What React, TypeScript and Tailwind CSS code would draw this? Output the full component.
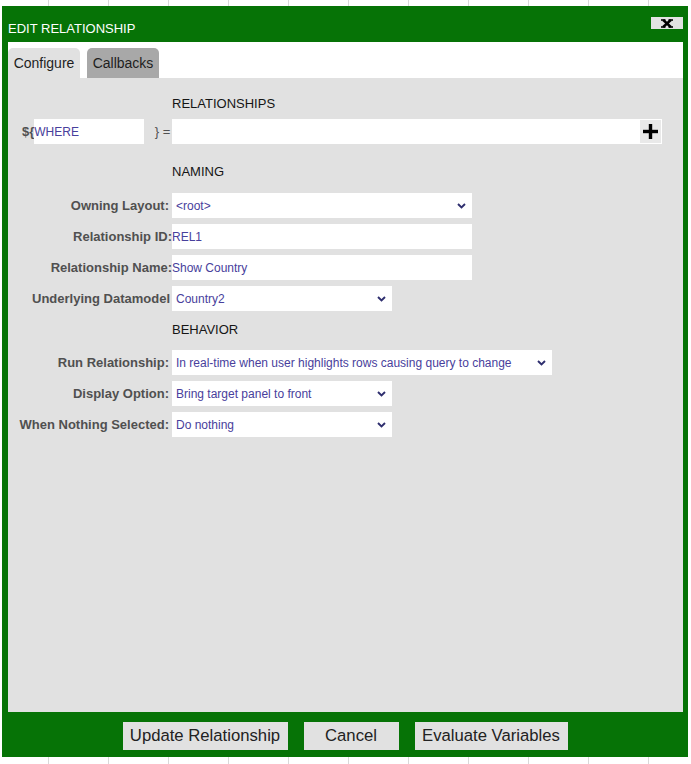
import React from "react";

const font = { fontFamily: '"Liberation Sans", Arial, sans-serif' };

function Chevron() {
  return (
    <svg width="9" height="6" viewBox="0 0 9 6" className="shrink-0">
      <polyline points="1,1 4.5,4.5 8,1" fill="none" stroke="#2e2e6e" strokeWidth="1.9" />
    </svg>
  );
}

function Label({ children, pr = "" }: { children: React.ReactNode; pr?: string }) {
  return (
    <div className={`w-[164px] shrink-0 text-right text-[13px] font-bold text-[#505050] leading-[15px] whitespace-nowrap ${pr}`}>
      {children}
    </div>
  );
}

function SelectRow({ label, value, width, mt }: { label: string; value: string; width: string; mt: string }) {
  return (
    <div className={`flex items-center h-[25px] ${mt}`}>
      <Label pr="pr-[3px]">{label}</Label>
      <div className={`${width} h-[25px] bg-white flex items-center justify-between pl-[4px] pr-[6px]`}>
        <span className="text-[12px] text-[#48409c] whitespace-nowrap">{value}</span>
        <Chevron />
      </div>
    </div>
  );
}

function InputRow({ label, value, mt }: { label: string; value: string; mt: string }) {
  return (
    <div className={`flex items-center h-[25px] ${mt}`}>
      <Label>{label}</Label>
      <div className="w-[300px] h-[25px] bg-white flex items-center">
        <span className="text-[12px] text-[#48409c] whitespace-nowrap">{value}</span>
      </div>
    </div>
  );
}

function Header({ children, mt }: { children: React.ReactNode; mt: string }) {
  return (
    <div className={`pl-[164px] text-[13px] leading-[15px] text-[#151515] ${mt}`}>{children}</div>
  );
}

export default function App() {
  return (
    <div
      style={font}
      className="w-[691px] h-[764px] overflow-hidden bg-white bg-[linear-gradient(to_right,#d9d9d9_1px,transparent_1px)] bg-size-[60px_100%] bg-position-[48px_0] pt-[6px] pl-[2px]"
    >
      <div className="w-[686px] h-[751px] bg-[#067306] flex flex-col">
        {/* Title bar */}
        <div className="h-[36px] shrink-0 flex items-start justify-between pl-[6px] pr-[5px]">
          <div className="mt-[15px] text-[13px] leading-[15px] text-white">EDIT RELATIONSHIP</div>
          <div className="mt-[11px] w-[32px] h-[12px] bg-[#e3e3e3] flex items-center justify-center">
            <svg width="12" height="9" viewBox="0 0 12 9">
              <g stroke="#000" fill="none">
                <line x1="2.2" y1="1" x2="9.8" y2="8" strokeWidth="2.4" />
                <line x1="9.8" y1="1" x2="2.2" y2="8" strokeWidth="2.4" />
                <line x1="0" y1="1" x2="4.5" y2="1" strokeWidth="1.6" />
                <line x1="7.5" y1="1" x2="12" y2="1" strokeWidth="1.6" />
                <line x1="0" y1="8" x2="4.5" y2="8" strokeWidth="1.6" />
                <line x1="7.5" y1="8" x2="12" y2="8" strokeWidth="1.6" />
              </g>
            </svg>
          </div>
        </div>

        {/* Body */}
        <div className="flex-1 ml-[6px] mr-[5px] flex flex-col">
          {/* Tabs */}
          <div className="h-[36px] shrink-0 bg-white flex items-end gap-[7px]">
            <div className="h-[30px] w-[72px] rounded-t-[5px] bg-[#e1e1e1] flex items-center justify-center text-[14px] text-[#1e1e1e]">
              Configure
            </div>
            <div className="h-[30px] w-[72px] rounded-t-[5px] bg-[#a8a8a8] flex items-center justify-center text-[14px] text-[#1e1e1e]">
              Callbacks
            </div>
          </div>

          {/* Content */}
          <div className="flex-1 bg-[#e1e1e1] flex flex-col">
            <Header mt="mt-[18px]">RELATIONSHIPS</Header>

            <div className="flex items-center h-[25px] mt-[8px] pl-[14px]">
              <span className="text-[13px] font-bold text-[#505050] leading-[15px]">{"${"}</span>
              <div className="w-[110px] h-[25px] bg-white flex items-center">
                <span className="text-[12px] text-[#48409c]">WHERE</span>
              </div>
              <span className="w-[28px] text-right pr-[2px] text-[13px] text-[#505050] leading-[15px] whitespace-nowrap">
                {"} ="}
              </span>
              <div className="w-[467px] h-[25px] bg-white" />
              <div className="w-[23px] h-[25px] bg-[#e9e9e9] border border-white flex items-center justify-center">
                <svg width="15" height="15" viewBox="0 0 15 15">
                  <rect x="0" y="5.8" width="15" height="3.4" fill="#000" />
                  <rect x="5.8" y="0" width="3.4" height="15" fill="#000" />
                </svg>
              </div>
            </div>

            <Header mt="mt-[20px]">NAMING</Header>
            <SelectRow label="Owning Layout:" value="<root>" width="w-[300px]" mt="mt-[14px]" />
            <InputRow label="Relationship ID:" value="REL1" mt="mt-[6px]" />
            <InputRow label="Relationship Name:" value="Show Country" mt="mt-[6px]" />
            <div className="flex items-center h-[25px] mt-[6px]">
              <Label pr="pr-[2px]">Underlying Datamodel</Label>
              <div className="w-[220px] h-[25px] bg-white flex items-center justify-between pl-[4px] pr-[6px]">
                <span className="text-[12px] text-[#48409c]">Country2</span>
                <Chevron />
              </div>
            </div>

            <Header mt="mt-[11px]">BEHAVIOR</Header>
            <SelectRow
              label="Run Relationship:"
              value="In real-time when user highlights rows causing query to change"
              width="w-[380px]"
              mt="mt-[13px]"
            />
            <SelectRow label="Display Option:" value="Bring target panel to front" width="w-[220px]" mt="mt-[6px]" />
            <SelectRow label="When Nothing Selected:" value="Do nothing" width="w-[220px]" mt="mt-[6px]" />
          </div>
        </div>

        {/* Footer */}
        <div className="h-[45px] shrink-0 flex justify-center items-start gap-[16px] pt-[10px]">
          <button className="w-[165px] h-[28px] bg-[#e1e1e1] text-[16.7px] text-[#222] leading-none flex items-center justify-center">
            Update Relationship
          </button>
          <button className="w-[95px] h-[28px] bg-[#e1e1e1] text-[16.7px] text-[#222] leading-none flex items-center justify-center">
            Cancel
          </button>
          <button className="w-[153px] h-[28px] bg-[#e1e1e1] text-[16.7px] text-[#222] leading-none flex items-center justify-center">
            Evaluate Variables
          </button>
        </div>
      </div>
    </div>
  );
}
